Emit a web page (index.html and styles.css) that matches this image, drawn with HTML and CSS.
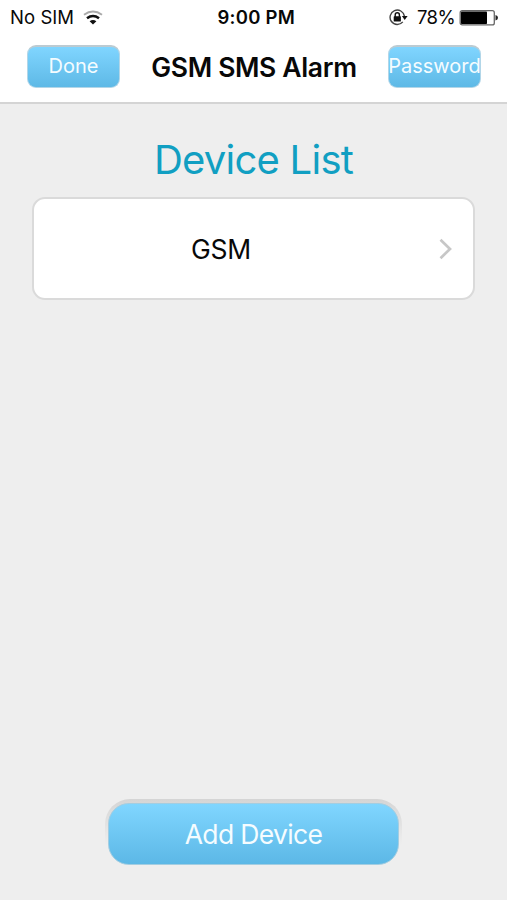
FILE: index.html
```html
<!DOCTYPE html>
<html lang="en">
<head>
<meta charset="utf-8">
<title>GSM SMS Alarm</title>
<link rel="stylesheet" href="styles.css">
</head>
<body>
<header class="top">
  <div class="status">
    <div class="carrier">
      <span class="sim">No SIM</span>
      <svg class="wifi" width="20" height="16" viewBox="0 0 20 16" fill="none">
        <path d="M1 4.7Q10-1.7 19 4.7" stroke="#aaa" stroke-width="2"/>
        <path d="M4 8.2Q10 3.8 16 8.2" stroke="#111" stroke-width="2.6"/>
        <path d="M6.6 11.3Q10 8.7 13.4 11.3L10 14.5Z" fill="#111"/>
      </svg>
    </div>
    <span class="clock">9:00 PM</span>
    <div class="power">
      <svg class="lock" width="20" height="18" viewBox="0 0 20 18" fill="none">
        <path d="M13.8 12.9A7.2 7.2 0 1 1 15.4 7.2" stroke="#444" stroke-width="1.4"/>
        <path d="M12.9 7H18.6L15.7 11Z" fill="#111"/>
        <rect x="4.7" y="7.3" width="7.2" height="5.3" rx=".6" fill="#111"/>
        <path d="M6.2 8V5.9a2.1 2.1 0 0 1 4.2 0V8" stroke="#111" stroke-width="1.4"/>
      </svg>
      <span class="percent">78%</span>
      <svg class="battery" width="40" height="16" viewBox="0 0 40 16">
        <rect x="1.2" y=".7" width="34.1" height="14.2" rx="2" fill="#fff" stroke="#666" stroke-width="1.3"/>
        <rect x="2" y="1.5" width="26" height="12.5" rx=".8" fill="#000"/>
        <path d="M36.5 5Q39 5.5 39 7.8T36.5 10.6Z" fill="#222"/>
      </svg>
    </div>
  </div>
  <nav class="nav">
    <button class="small done"><span>Done</span></button>
    <h1>GSM SMS Alarm</h1>
    <button class="small password"><span>Password</span></button>
  </nav>
</header>
<main>
  <h2>Device List</h2>
  <div class="device">
    <span class="name">GSM</span>
    <svg class="chevron" width="14" height="22" viewBox="0 0 14 22" fill="none"><path d="M1.5 1.8L11 11L1.5 20.2" stroke="#c7c7c7" stroke-width="2.7"/></svg>
  </div>
  <div class="add-frame"><button class="add"><span>Add Device</span></button></div>
</main>
</body>
</html>
```

FILE: styles.css
```css
* { box-sizing: border-box; }
body {
  margin: 0;
  height: 900px;
  display: flex;
  flex-direction: column;
  overflow: hidden;
  background: #eee;
  color: #080808;
  font-family: Inter, "Liberation Sans", sans-serif;
}
button {
  display: flex;
  align-items: center;
  justify-content: center;
  padding: 0;
  color: #f5fcff;
  font-family: inherit;
  white-space: nowrap;
}
.top {
  height: 104px;
  background: #fff;
  border-bottom: 2px solid #d4d4d4;
}
.status {
  height: 35px;
  display: grid;
  grid-template-columns: 1fr auto 1fr;
  align-items: center;
  padding: 0 8px 0 10px;
  font-size: 18.5px;
  line-height: 35px;
}
.carrier, .power { display: flex; align-items: center; }
.power { justify-content: flex-end; }
.sim { width: 64px; white-space: nowrap; letter-spacing: .05px; }
.wifi { margin-left: 9px; }
.clock { width: 74px; font-weight: 600; letter-spacing: .25px; white-space: nowrap; }
.percent { width: 39px; margin: 0 3px 0 8px; letter-spacing: -.6px; }
.nav { display: flex; padding: 10px 26px 0 27px; justify-content: space-between; }
.small {
  width: 93px;
  height: 43px;
  border: 1px solid #b2d6e8;
  border-top: 2px solid #bccbd2;
  border-radius: 9px;
  background: linear-gradient(#80d5ff, #5eb9e6);
  font-size: 20px;
}
.small span { position: relative; top: -1px; }
h1 { margin: 0; font-size: 26.5px; line-height: 45px; font-weight: 600; letter-spacing: -.35px; white-space: nowrap; }
main { flex: 1; display: flex; flex-direction: column; align-items: center; }
h2 { margin: 31px 0 0; height: 62px; font-size: 40px; line-height: 50px; font-weight: 400; letter-spacing: -.75px; color: #119fc2; white-space: nowrap; }
.device {
  width: 443px;
  height: 103px;
  display: flex;
  align-items: center;
  justify-content: space-between;
  padding: 0 20px 0 157px;
  border: 2px solid #dadada;
  border-radius: 13px;
  background: #fff;
}
.name { font-size: 26.5px; letter-spacing: -.3px; }
.add-frame {
  margin: auto 0 35px;
  padding: 4px 3px 0;
  border-radius: 25px 25px 22px 22px;
  background: linear-gradient(#d5d5d5, #eee 70%);
}
.add {
  width: 291px;
  height: 62px;
  border: 1px solid #a3cde1;
  border-radius: 21px;
  background: linear-gradient(#80d6ff, #5cb8e6);
  font-size: 26.5px;
  letter-spacing: -.65px;
}
```
